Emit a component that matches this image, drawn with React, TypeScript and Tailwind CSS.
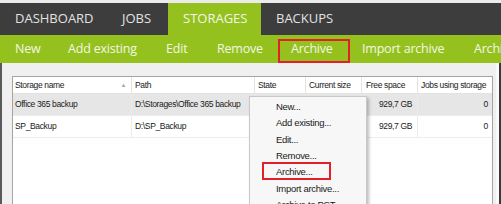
import React from 'react';

const tabs = [
  { label: 'DASHBOARD', w: 'w-[107px]', active: false },
  { label: 'JOBS', w: 'w-[61px]', active: false },
  { label: 'STORAGES', w: 'w-[93px]', active: true },
  { label: 'BACKUPS', w: 'w-[140px]', active: false },
];

const actions = [
  { label: 'New', w: 'w-[53px]' },
  { label: 'Add existing', w: 'w-[98px]' },
  { label: 'Edit', w: 'w-[51px]' },
  { label: 'Remove', w: 'w-[74px]' },
  { label: 'Archive', w: 'w-[71px]' },
  { label: 'Import archive', w: 'w-[112px]' },
  { label: 'Archive to PST', w: 'w-[120px]' },
];

const rows = [
  { name: 'Office 365 backup', path: 'D:\\Storages\\Office 365 backup', free: '929,7 GB', jobs: '0', selected: true },
  { name: 'SP_Backup', path: 'D:\\SP_Backup', free: '929,7 GB', jobs: '0', selected: false },
];

const menu = ['New...', 'Add existing...', 'Edit...', 'Remove...', 'Archive...', 'Import archive...', 'Archive to PST...'];

const cols = 'grid grid-cols-[119px_123px_51px_56px_56px_1fr]';

export default function App() {
  return (
    <div className="relative w-[501px] h-[204px] overflow-hidden bg-[#ebebeb] pt-[3px] font-['Open_Sans',sans-serif]">
      <div className="flex h-[32px] bg-[#3d3d3d]">
        {tabs.map(t => (
          <div
            key={t.label}
            className={`${t.w} shrink-0 flex items-center pl-[15px] text-[13px] ${t.active ? 'bg-[#95c11f] text-[#f3f7e6]' : 'text-[#e2e2e2]'}`}
          >
            {t.label}
          </div>
        ))}
      </div>

      <div className="flex h-[28px] bg-[#95c11f] text-[12.5px] text-[#f3f7e6] tracking-[-0.2px] whitespace-nowrap">
        {actions.map(a => (
          <div key={a.label} className={`${a.w} shrink-0 flex items-center pl-[15px]`}>
            {a.label}
          </div>
        ))}
      </div>

      <div className="flex h-[141px] bg-[#f0f0f0] border-l-2 border-[#5a5a5a]">
        <div className="ml-[10px] mt-[13px] w-[481px] h-full bg-white border border-[#a5a5a5] font-['Liberation_Sans',sans-serif] text-[8.5px] text-[#1a1a1a] tracking-[-0.35px] whitespace-nowrap">
          <div className={`${cols} h-[17px] border-b border-[#e3e3e3]`}>
            <div className="flex items-center justify-between pl-[2px] pr-[5px] border-r border-[#e3e3e3]">
              <span>Storage name</span>
              <span className="text-[6px] text-[#a8a8a8]">▲</span>
            </div>
            <div className="flex items-center pl-[3px] border-r border-[#e3e3e3]">Path</div>
            <div className="flex items-center pl-[3px] border-r border-[#e3e3e3]">State</div>
            <div className="flex items-center pl-[3px] border-r border-[#e3e3e3]">Current size</div>
            <div className="flex items-center pl-[4px] border-r border-[#e3e3e3]">Free space</div>
            <div className="flex items-center pl-[3px]">Jobs using storage</div>
          </div>
          {rows.map(r => (
            <div key={r.name} className={`${cols} h-[22px] border-b border-[#ececec] ${r.selected ? 'bg-[#e6e6e6]' : 'bg-white'}`}>
              <div className="flex items-center pl-[2px] border-r border-[#ececec]">{r.name}</div>
              <div className="flex items-center pl-[3px] border-r border-[#ececec] overflow-hidden">{r.path}</div>
              <div className="border-r border-[#ececec]" />
              <div className="border-r border-[#ececec]" />
              <div className="flex items-center justify-end pr-[5px] border-r border-[#ececec]">{r.free}</div>
              <div className="flex items-center justify-end pr-[4px]">{r.jobs}</div>
            </div>
          ))}
        </div>
        <div className="ml-[3px] w-[3px] h-full bg-[#fafafa]" />
        <div className="flex-1 bg-[#3a3a3a]" />
      </div>

      <div className="absolute left-[249px] top-[96px] w-[118px] bg-[#f7f7f7] border border-[#c8c8c8] shadow-[2px_2px_3px_rgba(0,0,0,0.25)] pt-[2px] font-['Liberation_Sans',sans-serif] text-[9.5px] text-[#1a1a1a] tracking-[-0.3px]">
        {menu.map(m => (
          <div key={m} className="h-[16.3px] flex items-center pl-[26px] whitespace-nowrap">{m}</div>
        ))}
      </div>

      <div className="absolute left-[278px] top-[39px] w-[72px] h-[24px] border-2 border-[#e3202a]" />
      <div className="absolute left-[262px] top-[162px] w-[69px] h-[18px] border-2 border-[#e3202a]" />
    </div>
  );
}
